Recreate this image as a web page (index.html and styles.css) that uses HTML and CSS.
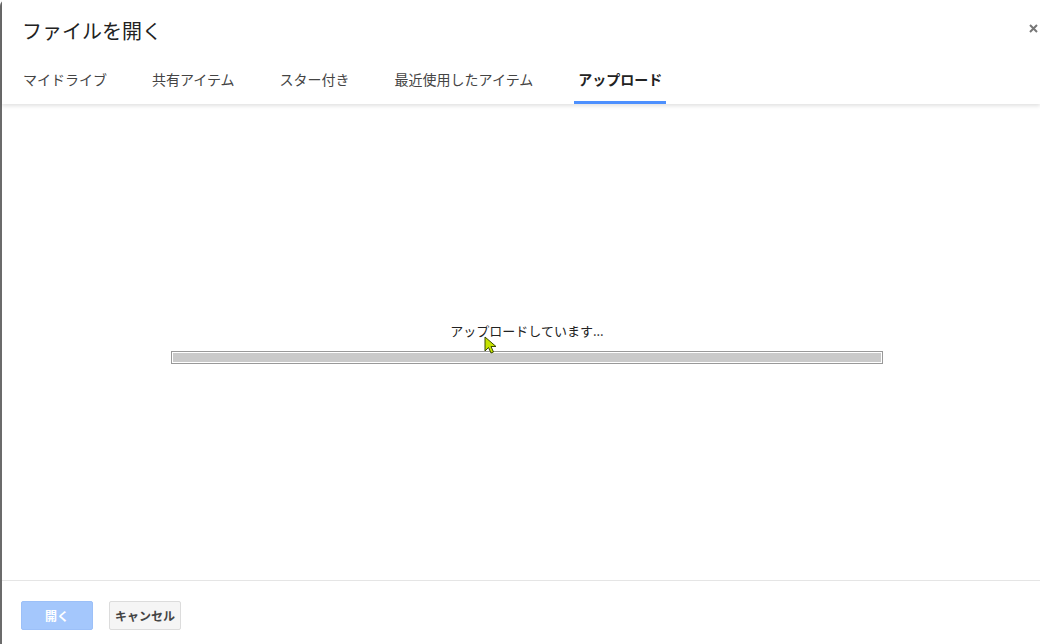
FILE: index.html
```html
<!DOCTYPE html>
<html lang="ja">
<head>
    <meta charset="UTF-8">
    <title>ファイルを開く</title>
    <link rel="stylesheet" href="styles.css">
</head>
<body>
    <div class="dialog">
        <div class="header">
            <div class="title-row">
                <h1 class="title">ファイルを開く</h1>
                <span class="close">
                    <svg width="9" height="9" viewBox="0 0 9 9"><path d="M1 1L8 8M8 1L1 8" stroke="#777" stroke-width="2"/></svg>
                </span>
            </div>
            <div class="tabs">
                <div class="tab">マイドライブ</div>
                <div class="tab">共有アイテム</div>
                <div class="tab">スター付き</div>
                <div class="tab">最近使用したアイテム</div>
                <div class="tab active">アップロード</div>
            </div>
        </div>

        <div class="main">
            <div class="upload">
                <p class="status">アップロードしています...</p>
                <div class="bar"><div class="fill"></div></div>
                <svg class="cursor" width="16" height="20" viewBox="0 0 16 20">
                    <path d="M1 1L1 15L4.5 11.5L7 17L9.5 16L7 10.5L12 10.5Z" fill="#c6e300" stroke="#3a4a00" stroke-width="1"/>
                </svg>
            </div>
        </div>

        <div class="footer">
            <button class="btn primary" type="button">開く</button>
            <button class="btn" type="button">キャンセル</button>
        </div>
    </div>
</body>
</html>
```

FILE: styles.css
```css
*{
    margin: 0;
    padding: 0;
    box-sizing: border-box;
    font-family: "Noto Sans CJK JP", "Noto Sans", sans-serif;
}
body{
    background: #fff;
}
.dialog{
    height: 644px;
    display: flex;
    flex-direction: column;
    border-left: 2px solid #6b6b6b;
    border-top-left-radius: 6px;
    background: #fff;
}
.header{
    position: relative;
    z-index: 1;
    background: #fff;
    box-shadow: 0 2px 4px rgba(0, 0, 0, 0.12);
}
.title-row{
    display: flex;
    justify-content: space-between;
    align-items: center;
    padding: 19px 2px 0 20px;
}
.title{
    font-size: 20px;
    font-weight: normal;
    line-height: 24px;
    color: #222;
}
.close{
    display: flex;
    margin-top: -6px;
}
.tabs{
    display: flex;
    gap: 37px;
    margin-top: 13px;
    padding-left: 17px;
}
.tab{
    padding: 15px 4px 14px;
    font-size: 14px;
    line-height: 16px;
    color: #444;
    border-bottom: 3px solid transparent;
}
.tab.active{
    color: #222;
    font-weight: bold;
    border-bottom-color: #4d90fe;
}
.main{
    flex: 1;
    display: flex;
    align-items: center;
    justify-content: center;
}
.upload{
    position: relative;
    width: 712px;
    margin-left: 12px;
    text-align: center;
    padding-top: 2px;
}
.status{
    font-size: 13px;
    line-height: 16px;
    color: #222;
    margin-bottom: 12px;
}
.bar{
    height: 13px;
    border: 1px solid #999;
    padding: 1px;
    background: #fff;
}
.fill{
    height: 100%;
    background: #cacaca;
}
.cursor{
    position: absolute;
    left: 313px;
    top: 15px;
}
.footer{
    display: flex;
    gap: 16px;
    padding: 20px 19px 0;
    height: 64px;
    border-top: 1px solid #e5e5e5;
}
.btn{
    min-width: 72px;
    height: 29px;
    padding: 0 5px;
    font-size: 12px;
    font-weight: bold;
    color: #444;
    background: #f5f5f5;
    border: 1px solid #dcdcdc;
    border-radius: 2px;
}
.btn.primary{
    color: #fff;
    background: #a4c7fc;
    border-color: #9cc0f8;
}
```
